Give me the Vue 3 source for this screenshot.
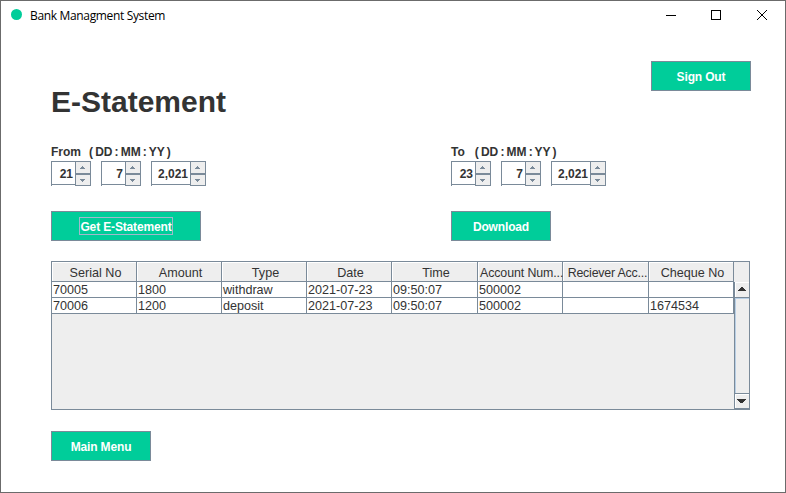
<script setup>
const ranges = [
  { label: 'From', day: '21', month: '7', year: '2,021', action: 'Get E-Statement', focused: true },
  { label: 'To', day: '23', month: '7', year: '2,021', action: 'Download', focused: false },
]
const columns = ['Serial No', 'Amount', 'Type', 'Date', 'Time', 'Account Num...', 'Reciever Acc...', 'Cheque No']
const rows = [
  ['70005', '1800', 'withdraw', '2021-07-23', '09:50:07', '500002', '', ''],
  ['70006', '1200', 'deposit', '2021-07-23', '09:50:07', '500002', '', '1674534'],
]
</script>

<template>
  <div class="window">
    <header class="titlebar">
      <span class="dot"></span>
      <span class="caption">Bank Managment System</span>
      <svg class="controls" width="102" height="12" viewBox="0 0 102 12" shape-rendering="crispEdges">
        <path d="M0 5.5h10" stroke="#000" fill="none" />
        <rect x="45.5" y="0.5" width="9" height="9" stroke="#000" fill="none" />
        <path d="M91 0l10 10M101 0l-10 10" stroke="#000" fill="none" shape-rendering="auto" />
      </svg>
    </header>

    <main class="content">
      <div class="top">
        <h1>E-Statement</h1>
        <button class="btn">Sign Out</button>
      </div>

      <div class="ranges">
        <section v-for="r in ranges" :key="r.label" class="range">
          <div class="range-label"><span>{{ r.label }}</span><span class="format">( DD : MM : YY )</span></div>
          <div class="spinners">
            <div v-for="part in ['day', 'month', 'year']" :key="part" class="spinner" :class="part">
              <span class="value">{{ r[part] }}</span>
              <span class="arrows">
                <span class="step"><svg width="5" height="3" viewBox="0 0 5 3" shape-rendering="crispEdges"><path d="M2 0h1v1h1v1h1v1h-5v-1h1v-1h1z" /></svg></span>
                <span class="step"><svg width="5" height="3" viewBox="0 0 5 3" shape-rendering="crispEdges"><path d="M0 0h5v1h-1v1h-1v1h-1v-1h-1v-1h-1z" /></svg></span>
              </span>
            </div>
          </div>
          <button class="btn" :class="{ wide: r.focused }"><span :class="{ focus: r.focused }">{{ r.action }}</span></button>
        </section>
      </div>

      <div class="table-pane">
        <div class="grid head">
          <div v-for="c in columns" :key="c" class="th" :class="{ long: c.endsWith('...') }">{{ c }}</div>
        </div>
        <div class="body">
          <div class="rows">
            <div v-for="(row, i) in rows" :key="i" class="grid">
              <div v-for="(cell, j) in row" :key="j" class="td">{{ cell }}</div>
            </div>
          </div>
          <div class="scrollbar">
            <span class="scroll-btn"><svg width="8" height="4" viewBox="0 0 8 4" shape-rendering="crispEdges"><path d="M3 0h2v1h1v1h1v1h1v1h-8v-1h1v-1h1v-1h1z" /></svg></span>
            <span class="thumb"></span>
            <span class="scroll-btn down"><svg width="9" height="4" viewBox="0 0 9 4" shape-rendering="crispEdges"><path d="M0 0h9v1h-1v1h-1v1h-1v1h-3v-1h-1v-1h-1v-1h-1z" /></svg></span>
          </div>
        </div>
      </div>

      <button class="btn">Main Menu</button>
    </main>
  </div>
</template>

<style>
body { margin: 0; background: #fff; overflow: hidden; }
</style>

<style scoped>
.window {
  box-sizing: border-box;
  width: 786px;
  height: 493px;
  border: 1px solid #6b6b6b;
  background: #fff;
  color: #333;
  font-family: "Liberation Sans", Arial, sans-serif;
  font-size: 12px;
}
.titlebar { display: flex; align-items: flex-start; height: 30px; padding: 0 17px 0 10px; }
.dot { width: 11px; height: 11px; margin-top: 8px; border-radius: 50%; background: #00cd9a; }
.caption {
  margin: 6px 0 0 8px;
  font: 12px/17px "Open Sans", "Noto Sans", sans-serif;
  letter-spacing: -0.34px;
  color: #000;
  white-space: nowrap;
}
.controls { margin: 9px 0 0 auto; }
.content { padding: 30px 0 0 50px; width: 700px; }
.top { display: flex; justify-content: space-between; height: 83px; }
h1 { margin: 23px 0 0; font-size: 30px; line-height: 36px; font-weight: bold; }
.btn {
  box-sizing: border-box;
  display: flex;
  align-items: center;
  justify-content: center;
  width: 100px;
  height: 30px;
  padding: 1px 0 0;
  border: 1px solid #7a8a99;
  border-radius: 0;
  background: #00cd9a;
  color: #fff;
  font: bold 12px/16px "Liberation Sans", Arial, sans-serif;
  letter-spacing: -0.15px;
  white-space: nowrap;
}
.btn.wide { width: 150px; padding: 0; }
.focus { height: 14px; padding-top: 2px; line-height: 15px; outline: 1px solid #a3b8cc; }
.ranges { display: flex; }
.range { width: 400px; flex: none; }
.range:last-child { width: auto; }
.range-label { display: flex; height: 17px; line-height: 16px; font-weight: bold; white-space: nowrap; }
.format { margin-left: 8px; word-spacing: -1.2px; }
.range:last-child .format { margin-left: 10px; }
.spinners { display: flex; gap: 10px; height: 50px; }
.spinner { box-sizing: border-box; display: flex; width: 40px; height: 25px; border: solid #7a8a99; border-width: 1px 0 0 1px; }
.spinner.year { width: 55px; }
.value {
  box-sizing: border-box;
  flex: 1;
  height: 23px;
  padding-right: 2px;
  border-bottom: 1px solid #7a8a99;
  text-align: right;
  font-weight: bold;
  line-height: 24px;
}
.arrows { display: flex; flex-direction: column; width: 16px; }
.step {
  box-sizing: border-box;
  display: flex;
  align-items: center;
  justify-content: center;
  height: 13px;
  padding-right: 2px;
  border: solid #7a8a99;
  border-width: 0 1px 2px;
  background: #eee;
}
.step + .step { height: 11px; border-bottom-width: 1px; }
.step svg { fill: #7a8a99; }
.table-pane {
  box-sizing: border-box;
  width: 699px;
  height: 149px;
  margin: 20px 0 21px;
  border: 1px solid #7a8a99;
  background: #eee;
  font-size: 12.6px;
}
.grid { display: grid; grid-template-columns: 85px 85px 85px 85px 86px 85px 86px 85px; }
.th, .td { box-sizing: border-box; border: solid #7a8a99; border-width: 0 1px 1px 0; white-space: nowrap; }
.th { height: 20px; line-height: 20px; padding: 1px 0 0 3px; text-align: center; box-shadow: inset 1px 1px #fff; }
.th.long { padding-left: 2px; font-size: 12.4px; letter-spacing: -0.1px; }
.th:nth-child(7) { padding-left: 4px; letter-spacing: -0.2px; }
.td { height: 16px; line-height: 16px; padding-left: 1px; background: #fff; }
.body { display: flex; height: 127px; }
.rows { width: 682px; }
.scrollbar { box-sizing: border-box; display: flex; flex-direction: column; width: 15px; border-left: 1px solid #7a8a99; }
.scroll-btn {
  box-sizing: border-box;
  display: flex;
  justify-content: center;
  height: 16px;
  padding: 5px 1px 0 0;
  border-bottom: 1px solid #7a8a99;
  box-shadow: inset 1px 1px #fff;
}
.scroll-btn svg { fill: #333; }
.thumb { box-sizing: border-box; flex: 1; border: solid #b8cfe5; border-width: 1px 0 0 1px; }
.scroll-btn.down { border-top: 1px solid #7a8a99; }
</style>
